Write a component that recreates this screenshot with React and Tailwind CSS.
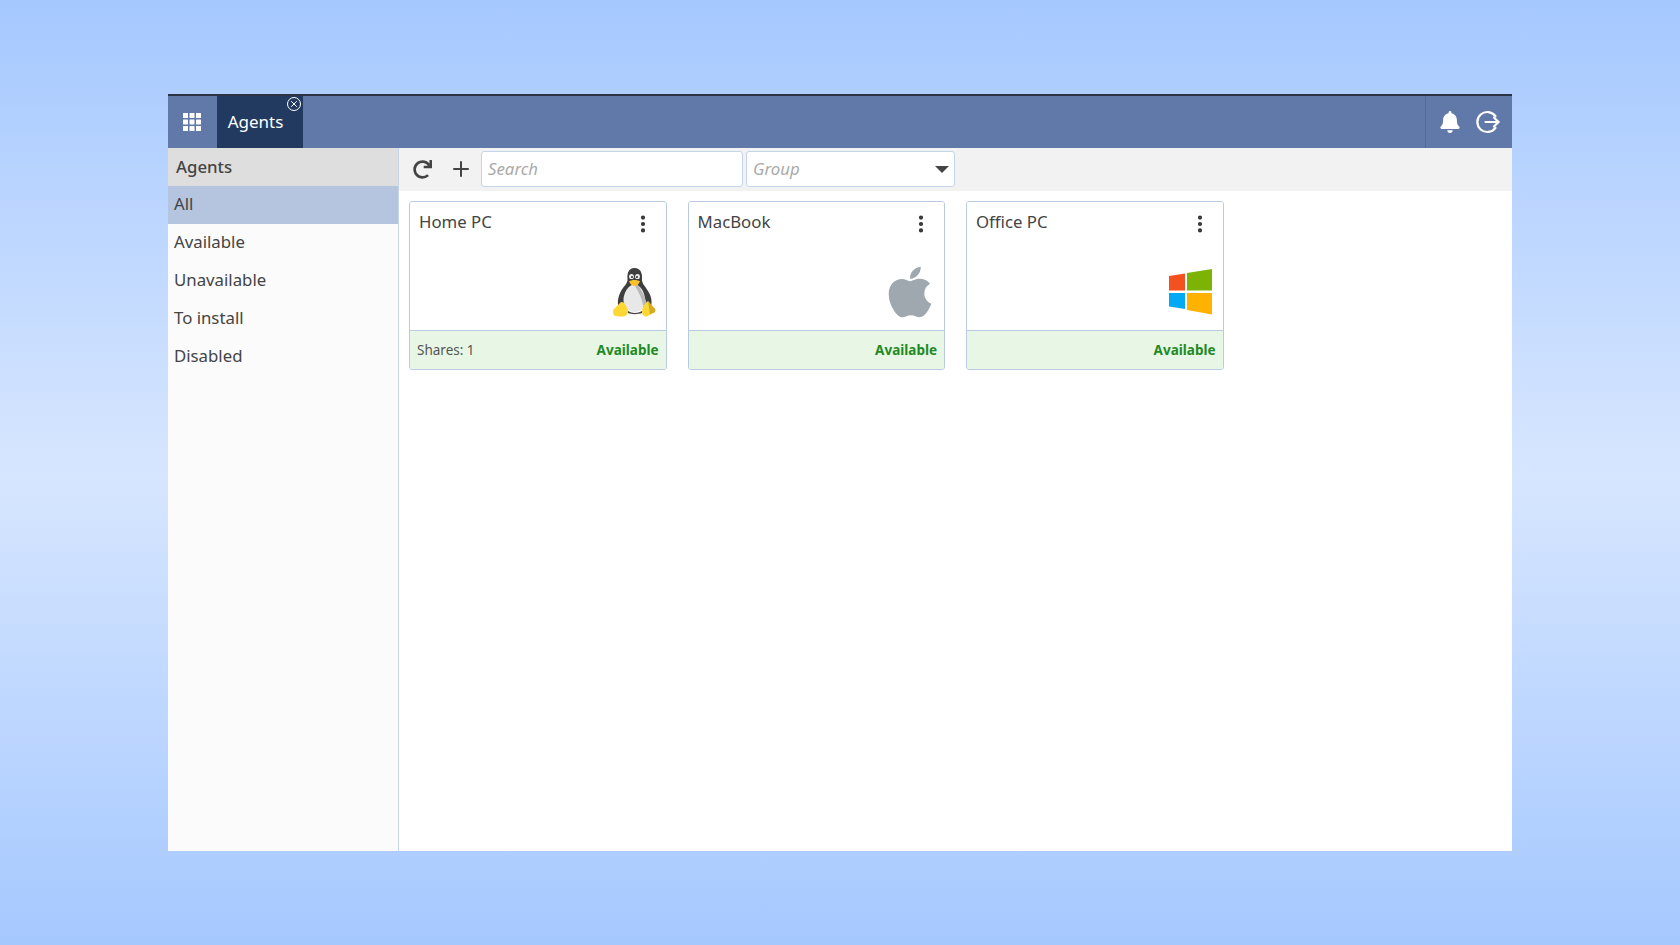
import React from 'react';
import { Plus, EllipsisVertical, X } from 'lucide-react';
import { FaApple, FaBell, FaRedo } from 'react-icons/fa';

const filters = ['All', 'Available', 'Unavailable', 'To install', 'Disabled'];

const GridIcon = () => (
  <svg width="18" height="18" viewBox="0 0 18 18" fill="#fff">
    {[0, 6.5, 13].map((y) =>
      [0, 6.5, 13].map((x) => <rect key={`${x}-${y}`} x={x} y={y} width="5" height="5" rx="0.5" />)
    )}
  </svg>
);

const LogoutIcon = () => (
  <svg width="24" height="24" viewBox="0 0 24 24" fill="none" stroke="#fff" strokeWidth="2.2" strokeLinecap="round" strokeLinejoin="round">
    <path d="M19.5 6.2A10 10 0 1 0 19.5 17.8" />
    <path d="M9.5 12H22.5" />
    <path d="M18 7.5L22.5 12L18 16.5" />
  </svg>
);

const LinuxIcon = () => (
  <svg width="43" height="52" viewBox="0 0 43 52">
    <path d="M21.5 1C15.5 1 14 6.5 14.5 12C15 16 11 19 8 24C5.5 29 4 34 5.5 40L38 40C39.5 34 38 28.5 35 24C32 19 28.5 16 29 12C29.5 6 27.5 1 21.5 1Z" fill="#3f3f3f" />
    <path d="M21.5 17C15 18 10.5 26 10.5 33C10.5 40 15 45 21.5 45C28 45 32 40 32 33C32 26 28 18 21.5 17Z" fill="#e8e8e8" />
    <path d="M24 17C28 22 32 29 34 37L30 38C29 31 25 24 22 19Z" fill="#b8b8b8" />
    <ellipse cx="18.5" cy="9.5" rx="2.4" ry="2.6" fill="#eee" />
    <ellipse cx="24.5" cy="9.5" rx="2.4" ry="2.6" fill="#eee" />
    <circle cx="19" cy="10" r="1" fill="#222" />
    <circle cx="24" cy="10" r="1" fill="#222" />
    <path d="M16 14.5C18.5 12.5 24.5 12.5 27 14.5C25.5 17.5 23.5 19 21.5 19C19.5 19 17.5 17.5 16 14.5Z" fill="#fbc02d" />
    <path d="M0 43L8 35C11 34.5 13 38 15 43C15.5 46 14.5 48 12 49C8 50 3 49.5 0.5 48Z" fill="#fdd835" />
    <path d="M31 38L35 34L42 42C43 44 42 45.5 40 46L34 49.5C31 50 29 48 29 45C29 43 30 40 31 38Z" fill="#fdd835" />
    <path d="M35 34L42 42C43 44 42 45.5 40 46L37 47.5Z" fill="#d4ac23" />
    <path d="M15 44C19 46.5 25 46.5 29 44L29 46C25 47.5 19 47.5 15 46Z" fill="#444" />
  </svg>
);

const WindowsIcon = () => (
  <svg width="44" height="46" viewBox="0 0 44 46">
    <polygon points="0,7 16,4.5 16,21.5 0,21.5" fill="#f4511e" />
    <polygon points="18,4 43,0 43,21.5 18,21.5" fill="#7cb305" />
    <polygon points="0,24 16,24 16,40 0,37.5" fill="#03a9f4" />
    <polygon points="18,24 43,24 43,45.5 18,41" fill="#ffb300" />
  </svg>
);

const agents = [
  { name: 'Home PC', shares: 'Shares: 1', icon: <LinuxIcon />, place: 'pb-[11px] -mr-[2px]' },
  { name: 'MacBook', shares: '', icon: <FaApple size={58} color="#9ea8ae" />, place: 'pb-[9px] -mr-[7px]' },
  { name: 'Office PC', shares: '', icon: <WindowsIcon />, place: 'pb-[15px] -mr-[2px]' },
];

const AgentCard = ({ name, shares, icon, place }) => (
  <div className="w-[257.5px] h-[169px] flex flex-col rounded-[3px] border border-[#b9cbe2] overflow-hidden">
    <div className="flex-1 flex flex-col pl-[9px] pr-[12px] pt-2 bg-white">
      <div className="flex justify-between items-start">
        <span className="text-[16.8px] leading-[24px] text-[#444]">{name}</span>
        <EllipsisVertical size={22} strokeWidth={2.6} color="#333" className="mt-[3px]" />
      </div>
      <div className={`flex-1 flex justify-end items-end ${place}`}>{icon}</div>
    </div>
    <div className="h-[39px] flex items-center justify-between px-[7px] bg-[#e7f6e5] border-t border-[#b9cbe2] text-[13.5px]">
      <span className="text-[#555]">{shares}</span>
      <span className="font-bold text-[#1f8a24]">Available</span>
    </div>
  </div>
);

export default function App() {
  return (
    <div
      className="w-full h-screen flex items-center justify-center bg-gradient-to-b from-[#a5c8ff] via-[#d7e6ff] to-[#a5c8ff] text-[#444]"
      style={{ fontFamily: '"Noto Sans", sans-serif' }}
    >
      <div className="w-[1344px] h-[757px] flex flex-col bg-white">
        <header className="h-[54px] flex items-stretch bg-[#6079a9] border-t-2 border-[#2c3444]">
          <div className="w-[49px] flex items-center justify-center pr-[1px]">
            <GridIcon />
          </div>
          <div className="relative w-[86px] flex items-center justify-center pr-[9px] pb-[1px] bg-[#223a60] text-white text-[17px]">
            Agents
            <span className="absolute top-[1px] right-[2px] w-[14px] h-[14px] rounded-full border-[1.5px] border-white flex items-center justify-center">
              <X size={10} color="#fff" strokeWidth={2.4} />
            </span>
          </div>
          <div className="flex-1" />
          <div className="w-[87px] flex items-center justify-center gap-[15px] border-l border-[#4f6a9f]">
            <FaBell size={22} color="#fff" />
            <LogoutIcon />
          </div>
        </header>
        <div className="flex-1 flex min-h-0">
          <aside className="w-[230px] bg-[#fbfbfb] border-r border-[#c7d5e6] box-content">
            <div className="h-[38px] flex items-center pl-2 bg-[#dedede] text-[16.8px] font-medium text-[#444]">Agents</div>
            {filters.map((f, i) => (
              <div
                key={f}
                className={`h-[38px] flex items-center pl-1.5 pb-[2px] text-[16.8px] ${i === 0 ? 'bg-[#b5c5df] pb-[1px]' : ''}`}
              >
                {f}
              </div>
            ))}
          </aside>
          <main className="flex-1 flex flex-col">
            <div className="h-[43px] flex items-center pl-[14px] pb-[1px] bg-[#f2f2f2]">
              <FaRedo size={19} color="#444" />
              <Plus size={24} strokeWidth={2} color="#444" className="ml-[17px]" />
              <div className="ml-[8px] w-[262px] h-[36px] flex items-center px-1.5 bg-white border border-[#c5d4e8] rounded-[3px] text-[16.8px] italic text-[#aaa]">
                Search
              </div>
              <div className="ml-[3px] w-[209px] h-[36px] flex items-center justify-between pl-1.5 pr-1 bg-white border border-[#c5d4e8] rounded-[3px] text-[16.8px] italic text-[#aaa]">
                Group
                <span className="w-0 h-0 mr-[1px] border-x-[7px] border-x-transparent border-t-[7px] border-t-[#444]" />
              </div>
            </div>
            <div className="flex-1 flex gap-[21px] pl-[10px] pt-[10px] bg-white">
              {agents.map((a) => (
                <AgentCard key={a.name} {...a} />
              ))}
            </div>
          </main>
        </div>
      </div>
    </div>
  );
}
